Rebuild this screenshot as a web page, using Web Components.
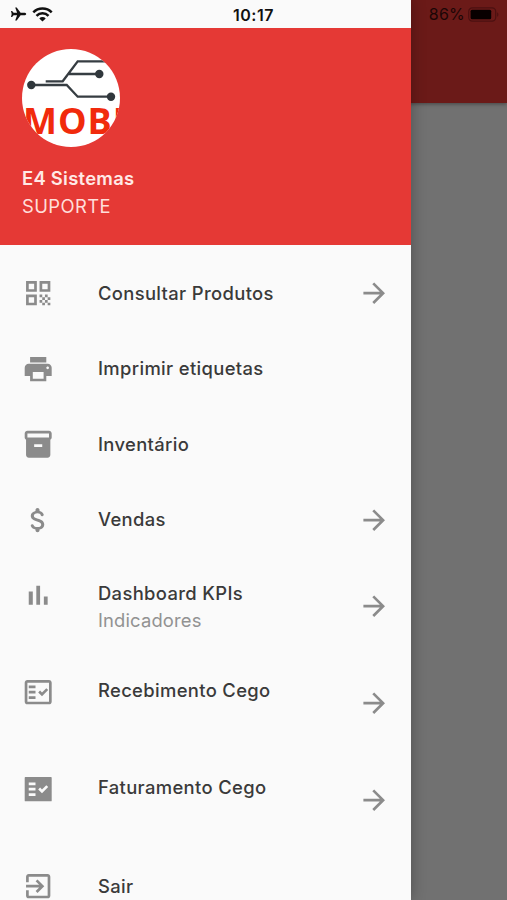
<!DOCTYPE html>
<html lang="pt-BR">
<head>
<meta charset="utf-8">
<title>E4 Sistemas</title>
<style>
  html, body {
    margin: 0;
    height: 100%;
    overflow: hidden;
  }
  body {
    font-family: Inter, "Liberation Sans", sans-serif;
  }
</style>
</head>
<body>
<app-shell>
  <side-drawer slot="drawer">
    <drawer-header slot="header" name="E4 Sistemas" role-name="SUPORTE"></drawer-header>
    <menu-item icon="qr" arrow>Consultar Produtos</menu-item>
    <menu-item icon="print">Imprimir etiquetas</menu-item>
    <menu-item icon="archive">Inventário</menu-item>
    <menu-item icon="money" arrow>Vendas</menu-item>
    <menu-item icon="chart" arrow tall>Dashboard KPIs<span slot="sub">Indicadores</span></menu-item>
    <menu-item icon="check" arrow tall>Recebimento Cego</menu-item>
    <menu-item icon="checkFilled" arrow tall>Faturamento Cego</menu-item>
    <menu-item icon="exit">Sair</menu-item>
  </side-drawer>
</app-shell>

<script>
const ICONS = {
  qr: 'M3 11h8V3H3v8zm2-6h4v4H5V5zM3 21h8v-8H3v8zm2-6h4v4H5v-4zM13 3v8h8V3h-8zm6 6h-4V5h4v4zM19 19h2v2h-2zM13 13h2v2h-2zM15 15h2v2h-2zM13 17h2v2h-2zM15 19h2v2h-2zM17 17h2v2h-2zM17 13h2v2h-2zM19 15h2v2h-2z',
  print: 'M19 8H5c-1.66 0-3 1.34-3 3v6h4v4h12v-4h4v-6c0-1.66-1.34-3-3-3zm-3 11H8v-5h8v5zm3-7c-.55 0-1-.45-1-1s.45-1 1-1 1 .45 1 1-.45 1-1 1zm-1-9H6v4h12V3z',
  archive: 'M20 2H4c-1 0-2 .9-2 2v3.01c0 .72.43 1.34 1 1.69V20c0 1.1 1.1 2 2 2h14c.9 0 2-.9 2-2V8.7c.57-.35 1-.97 1-1.69V4c0-1.1-1-2-2-2zm-5 12H9v-2h6v2zm5-7H4V4h16v3z',
  money: 'M11.8 10.9c-2.27-.59-3-1.2-3-2.15 0-1.09 1.01-1.85 2.7-1.85 1.4 0 2.1.55 2.38 1.4.15.42.5.75.95.75h.25c.72 0 1.2-.7.95-1.38-.42-1.2-1.42-2.17-3.03-2.57V4.5c0-.83-.67-1.5-1.5-1.5S10 3.67 10 4.5v.66c-1.94.42-3.5 1.68-3.5 3.61 0 2.31 1.91 3.46 4.7 4.13 2.5.6 3 1.48 3 2.41 0 .69-.49 1.79-2.7 1.79-1.65 0-2.5-.59-2.83-1.43-.16-.41-.51-.67-.93-.67h-.22c-.74 0-1.22.75-.92 1.43.6 1.37 1.9 2.14 3.4 2.42v.65c0 .83.67 1.5 1.5 1.5s1.5-.67 1.5-1.5v-.65c1.95-.37 3.5-1.5 3.5-3.55 0-2.84-2.43-3.81-4.7-4.4z',
  chart: 'M5 9.2h3V19H5zM10.6 5h2.8v14h-2.8zM16.2 13H19v6h-2.8z',
  check: 'M20 3H4c-1.1 0-2 .9-2 2v14c0 1.1.9 2 2 2h16c1.1 0 2-.9 2-2V5c0-1.1-.9-2-2-2zm0 16H4V5h16v14zM5 7h5v2H5zM5 11h5v2H5zM5 15h5v2H5zM19.41 10.42 17.99 9l-3.17 3.17-1.41-1.42L12 12.16 14.82 15z',
  checkFilled: 'M21.5 3h-19c-.3 0-.5.2-.5.5v17c0 .3.2.5.5.5h19c.3 0 .5-.2.5-.5v-17c0-.3-.2-.5-.5-.5zM10 17H5v-2h5v2zm0-4H5v-2h5v2zm0-4H5V7h5v2zm4.82 6L12 12.16l1.41-1.41 1.41 1.42L17.99 9l1.42 1.42L14.82 15z',
  exit: 'M10.09 15.59L11.5 17l5-5-5-5-1.41 1.41L12.67 11H3v2h9.67l-2.58 2.59zM19 3H5c-1.11 0-2 .9-2 2v4h2V5h14v14H5v-4H3v4c0 1.1.89 2 2 2h14c1.1 0 2-.9 2-2V5c0-1.1-.9-2-2-2z',
  arrow: 'M12 4l-1.41 1.41L16.17 11H4v2h12.17l-5.58 5.59L12 20l8-8z'
};

class MdIcon extends HTMLElement {
  connectedCallback() {
    this.attachShadow({ mode: 'open' });
    this.shadowRoot.innerHTML = `
      <style>
        :host {
          display: block;
          flex: none;
          width: 32.4px;
          height: 32.4px;
          color: #8b8b8b;
        }
        svg { display: block; }
      </style>
      <svg width="100%" height="100%" viewBox="0 0 24 24" fill="currentColor" fill-rule="evenodd">
        <path d="${ICONS[this.getAttribute('name')]}"/>
      </svg>
    `;
  }
}
customElements.define('md-icon', MdIcon);

class MenuItem extends HTMLElement {
  connectedCallback() {
    const icon = this.getAttribute('icon');
    this.attachShadow({ mode: 'open' });
    this.shadowRoot.innerHTML = `
      <style>
        :host {
          display: flex;
          align-items: center;
          box-sizing: border-box;
          height: 75.5px;
          padding: 0 21px 0 21.8px;
          flex: none;
        }
        :host([tall]) { height: 97.1px; }
        .text {
          flex: 1;
          margin-left: 43.8px;
          padding-bottom: 1.4px;
          white-space: nowrap;
        }
        .title {
          font-size: 18.4px;
          font-weight: 500;
          line-height: 26px;
          letter-spacing: 0.35px;
          color: #3a3a3a;
        }
        .sub {
          font-size: 18.4px;
          line-height: 28px;
          letter-spacing: 0.15px;
          color: #929292;
        }
        :host([tall]) .text {
          align-self: flex-start;
          padding-top: 22.5px;
        }
        :host([tall]) .lead {
          align-self: flex-start;
          margin-top: 21.6px;
        }
      </style>
      <md-icon class="lead" name="${icon}"></md-icon>
      <div class="text">
        <div class="title"><slot></slot></div>
        ${this.querySelector('[slot=sub]') ? '<div class="sub"><slot name="sub"></slot></div>' : ''}
      </div>
      ${this.hasAttribute('arrow') ? '<md-icon name="arrow"></md-icon>' : ''}
    `;
  }
}
customElements.define('menu-item', MenuItem);

class BrandAvatar extends HTMLElement {
  connectedCallback() {
    this.attachShadow({ mode: 'open' });
    this.shadowRoot.innerHTML = `
      <style>
        :host {
          display: block;
          width: 98px;
          height: 98px;
          border-radius: 50%;
          overflow: hidden;
          background: #fff;
        }
        svg { display: block; }
        text {
          font: 700 36px "Open Sans", sans-serif;
          letter-spacing: 1px;
          fill: #f12a0c;
        }
      </style>
      <svg width="98" height="98" viewBox="0 0 98 98">
        <g fill="none" stroke="#363d42" stroke-width="2.3">
          <path d="M23.7 32.3h17l15-20H84M47 25h30"/>
          <path d="M9.3 36h35.4l11 11.7H89"/>
        </g>
        <g fill="#30373c">
          <circle cx="9.3" cy="36" r="4.2"/>
          <circle cx="77.3" cy="25" r="4.2"/>
          <circle cx="89" cy="47.7" r="4.2"/>
        </g>
        <text x="1" y="85.3">MOBI</text>
      </svg>
    `;
  }
}
customElements.define('brand-avatar', BrandAvatar);

class DrawerHeader extends HTMLElement {
  connectedCallback() {
    this.attachShadow({ mode: 'open' });
    this.shadowRoot.innerHTML = `
      <style>
        :host {
          display: block;
          box-sizing: border-box;
          height: 217px;
          padding: 21px 22px 0;
          background: #e53935;
          flex: none;
        }
        .name, .role {
          font-size: 18.4px;
          line-height: 28px;
          color: #ffe9e6;
        }
        .name {
          margin-top: 17px;
          font-weight: 600;
          letter-spacing: 0.28px;
        }
        .role {
          color: #ffdeda;
          letter-spacing: 0.4px;
        }
      </style>
      <brand-avatar></brand-avatar>
      <div class="name">${this.getAttribute('name')}</div>
      <div class="role">${this.getAttribute('role-name')}</div>
    `;
  }
}
customElements.define('drawer-header', DrawerHeader);

class SideDrawer extends HTMLElement {
  connectedCallback() {
    this.attachShadow({ mode: 'open' });
    this.shadowRoot.innerHTML = `
      <style>
        :host {
          display: flex;
          flex-direction: column;
          box-sizing: border-box;
          width: 411px;
          height: 100%;
          padding-top: 28px;
          overflow: hidden;
          background: #fafafa;
          box-shadow: 0 0 14px rgba(0, 0, 0, 0.3);
        }
        .list {
          display: flex;
          flex-direction: column;
          padding-top: 10.6px;
        }
      </style>
      <slot name="header"></slot>
      <div class="list"><slot></slot></div>
    `;
  }
}
customElements.define('side-drawer', SideDrawer);

class StatusBar extends HTMLElement {
  connectedCallback() {
    this.attachShadow({ mode: 'open' });
    this.shadowRoot.innerHTML = `
      <style>
        :host {
          display: grid;
          grid-template-columns: 1fr auto 1fr;
          align-items: center;
          box-sizing: border-box;
          height: 28px;
          padding: 0 8px 0 10px;
          color: #111;
        }
        .left, .right {
          display: flex;
          align-items: center;
        }
        .left { gap: 5px; }
        .right {
          justify-content: flex-end;
          gap: 3px;
          color: #1b0606;
          font-size: 16px;
          letter-spacing: 0.2px;
        }
        .time {
          margin: 1px 2px 0 0;
          font-size: 16px;
          font-weight: 600;
          letter-spacing: 0.5px;
        }
        svg { display: block; }
      </style>
      <div class="left">
        <svg width="17" height="14" viewBox="0 0 17 14" fill="currentColor">
          <path d="M16.2 7c0-.8-1-1.3-2.2-1.3h-3.4L6.7.6H5.2l1.9 5.1H3.6L2.1 3.9H1L1.7 7 1 10.1h1.1l1.5-1.8h3.5l-1.9 5.1h1.5l3.9-5.1H14c1.2 0 2.2-.5 2.2-1.3z"/>
        </svg>
        <svg width="21" height="15" viewBox="0 0 21 15" fill="none" stroke="currentColor" stroke-width="2.5">
          <path d="M1.3 5.4a13 13 0 0 1 18.4 0M4.5 8.8a8.4 8.4 0 0 1 12 0"/>
          <path d="M10.5 14.6 7.3 11.4a4.5 4.5 0 0 1 6.4 0z" fill="currentColor" stroke="none"/>
        </svg>
      </div>
      <div class="time">10:17</div>
      <div class="right">
        <span>86%</span>
        <svg width="31" height="15" viewBox="0 0 31 15">
          <rect x=".7" y=".9" width="27" height="13.2" rx="3.6" fill="none" stroke="#4c1010" stroke-width="1.2"/>
          <rect x="2.6" y="2.8" width="20.6" height="9.4" rx="1.5" fill="#080000"/>
          <path d="M29.1 5.2c1.8.8 1.8 3.8 0 4.6z" fill="#4c1010"/>
        </svg>
      </div>
    `;
  }
}
customElements.define('status-bar', StatusBar);

class AppShell extends HTMLElement {
  connectedCallback() {
    this.attachShadow({ mode: 'open' });
    this.shadowRoot.innerHTML = `
      <style>
        :host {
          display: grid;
          grid-template: 100vh / 100vw;
          background: #717171;
          overflow: hidden;
        }
        .bar, status-bar, ::slotted(side-drawer) {
          grid-area: 1 / 1;
          align-self: start;
        }
        .bar {
          height: 103px;
          background: #6b1a18;
          box-shadow: 0 1px 4px rgba(0, 0, 0, 0.4);
        }
      </style>
      <div class="bar"></div>
      <slot name="drawer"></slot>
      <status-bar></status-bar>
    `;
  }
}
customElements.define('app-shell', AppShell);
</script>
</body>
</html>
